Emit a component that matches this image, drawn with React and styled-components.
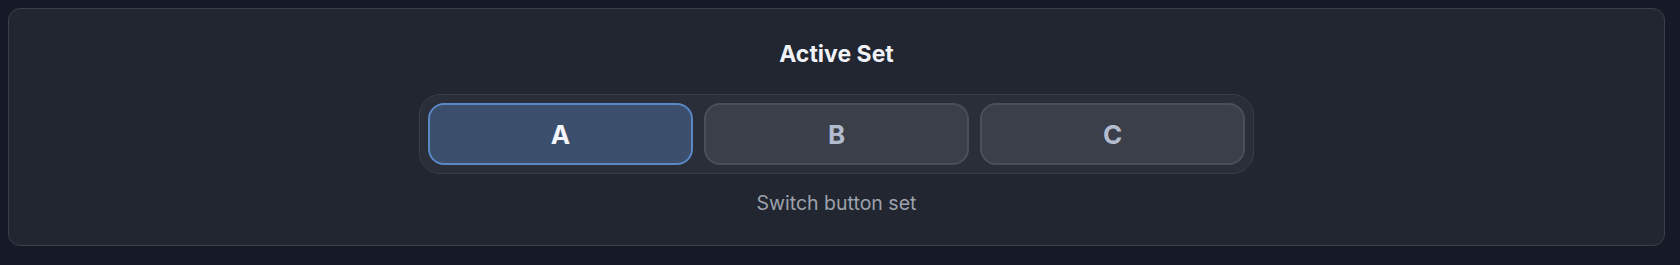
import React, { useState } from "react";
import styled, { createGlobalStyle } from "styled-components";

const Global = createGlobalStyle`
  html, body { background: #151a26; }
  body {
    margin: 0;
    padding: 8px 15px 20px 8px;
    font-family: Inter, "Noto Sans", "Liberation Sans", sans-serif;
  }
`;

const Card = styled.section`
  box-sizing: border-box;
  height: 238px;
  background: #212630;
  border: 1px solid #3a3f4b;
  border-radius: 12px;
  display: flex;
  flex-direction: column;
  align-items: center;
  padding-top: 30px;
`;

const Title = styled.h2`
  margin: 0;
  font-size: 23px;
  line-height: 30px;
  font-weight: 700;
  color: #f1f3f9;
`;

const Segmented = styled.div`
  margin-top: 25px;
  display: flex;
  gap: 11px;
  padding: 8px;
  background: #292e39;
  border: 1px solid #383d48;
  border-radius: 21px;
`;

const SetButton = styled.button`
  box-sizing: border-box;
  width: 265px;
  height: 62px;
  border-radius: 16px;
  border: 2px solid ${(p) => (p.$active ? "#5a87c6" : "#4a4f5b")};
  background: ${(p) => (p.$active ? "#3b4f6c" : "#3a3f4a")};
  color: ${(p) => (p.$active ? "#f4f6fb" : "#b3bccf")};
  font-family: inherit;
  font-size: 26px;
  font-weight: 700;
  cursor: pointer;
`;

const Caption = styled.p`
  margin: 17px 0 0;
  font-size: 19.5px;
  line-height: 24px;
  color: #9ea2ac;
`;

export default function App() {
  const [active, setActive] = useState("A");
  return (
    <>
      <Global />
      <Card>
        <Title>Active Set</Title>
        <Segmented>
          {["A", "B", "C"].map((s) => (
            <SetButton key={s} $active={active === s} onClick={() => setActive(s)}>
              {s}
            </SetButton>
          ))}
        </Segmented>
        <Caption>Switch button set</Caption>
      </Card>
    </>
  );
}
